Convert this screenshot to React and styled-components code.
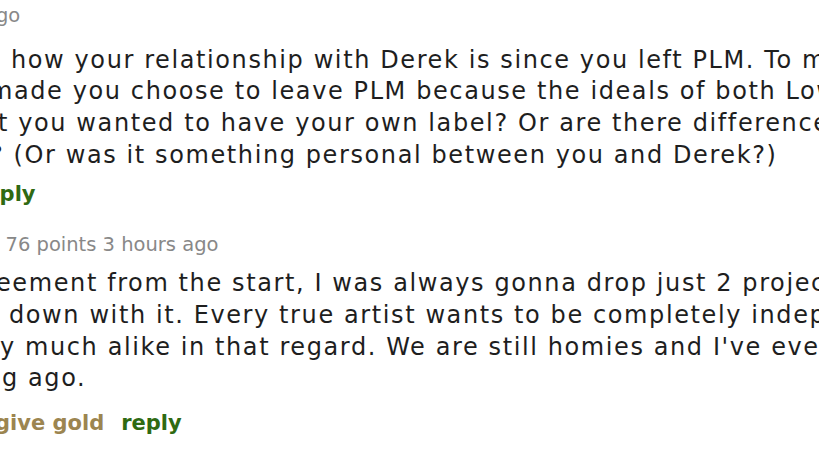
import React from "react";
import styled, { createGlobalStyle } from "styled-components";

const GlobalStyle = createGlobalStyle`
  html, body {
    margin: 0;
    padding: 0;
    background: #ffffff;
    overflow: hidden;
  }
  #root {
    width: 819px;
    height: 452px;
  }
`;

const Page = styled.div`
  width: 819px;
  height: 452px;
  overflow: hidden;
  background: #ffffff;
  display: flex;
  flex-direction: column;
  gap: 25px;
  padding-top: 4px;
  box-sizing: border-box;
  font-family: "DejaVu Sans", Verdana, sans-serif;
`;

const Comment = styled.div`
  display: flex;
  flex-direction: column;
`;

const Tagline = styled.div`
  font-size: 19.5px;
  line-height: 24px;
  height: 24px;
  color: #888888;
  white-space: nowrap;
  margin-left: ${(p) => p.$shift}px;
`;

const Body = styled.div`
  margin-top: ${(p) => p.$top}px;
  display: flex;
  flex-direction: column;
  color: #1e1e1e;
  font-size: 24px;
  line-height: 31.7px;
  letter-spacing: 1.6px;
`;

const Line = styled.div`
  white-space: nowrap;
  height: 31.7px;
  margin-left: ${(p) => p.$shift}px;
`;

const Buttons = styled.ul`
  list-style: none;
  margin: ${(p) => p.$top}px 0 0 ${(p) => p.$shift}px;
  padding: 0;
  display: flex;
  gap: 17px;
  font-size: 21px;
  line-height: 28px;
  height: 28px;
  font-weight: bold;
  white-space: nowrap;
`;

const Button = styled.li`
  color: ${(p) => (p.$kind === "gold" ? "#9c8550" : "#2f6a12")};
`;

export default function App() {
  return (
    <>
      <GlobalStyle />
      <Page>
        <Comment>
          <Tagline $shift={-16}>ago</Tagline>
          <Body $top={16.5}>
            <Line $shift={11}>
              how your relationship with Derek is since you left PLM. To me it seems
            </Line>
            <Line $shift={-11}>
              made you choose to leave PLM because the ideals of both Lowkey and
            </Line>
            <Line $shift={-2}>
              t you wanted to have your own label? Or are there differences in vision
            </Line>
            <Line $shift={-10}>
              ? (Or was it something personal between you and Derek?)
            </Line>
          </Body>
          <Buttons $top={9} $shift={-25}>
            <Button $kind="reply">reply</Button>
          </Buttons>
        </Comment>
        <Comment>
          <Tagline $shift={5.5}>76 points 3 hours ago</Tagline>
          <Body $top={11}>
            <Line $shift={-4}>
              eement from the start, I was always gonna drop just 2 projects with
            </Line>
            <Line $shift={9}>
              down with it. Every true artist wants to be completely independent and
            </Line>
            <Line $shift={0}>
              y much alike in that regard. We are still homies and I've even
            </Line>
            <Line $shift={2}>g ago.</Line>
          </Body>
          <Buttons $top={14} $shift={-5}>
            <Button $kind="gold">give gold</Button>
            <Button $kind="reply">reply</Button>
          </Buttons>
        </Comment>
      </Page>
    </>
  );
}
